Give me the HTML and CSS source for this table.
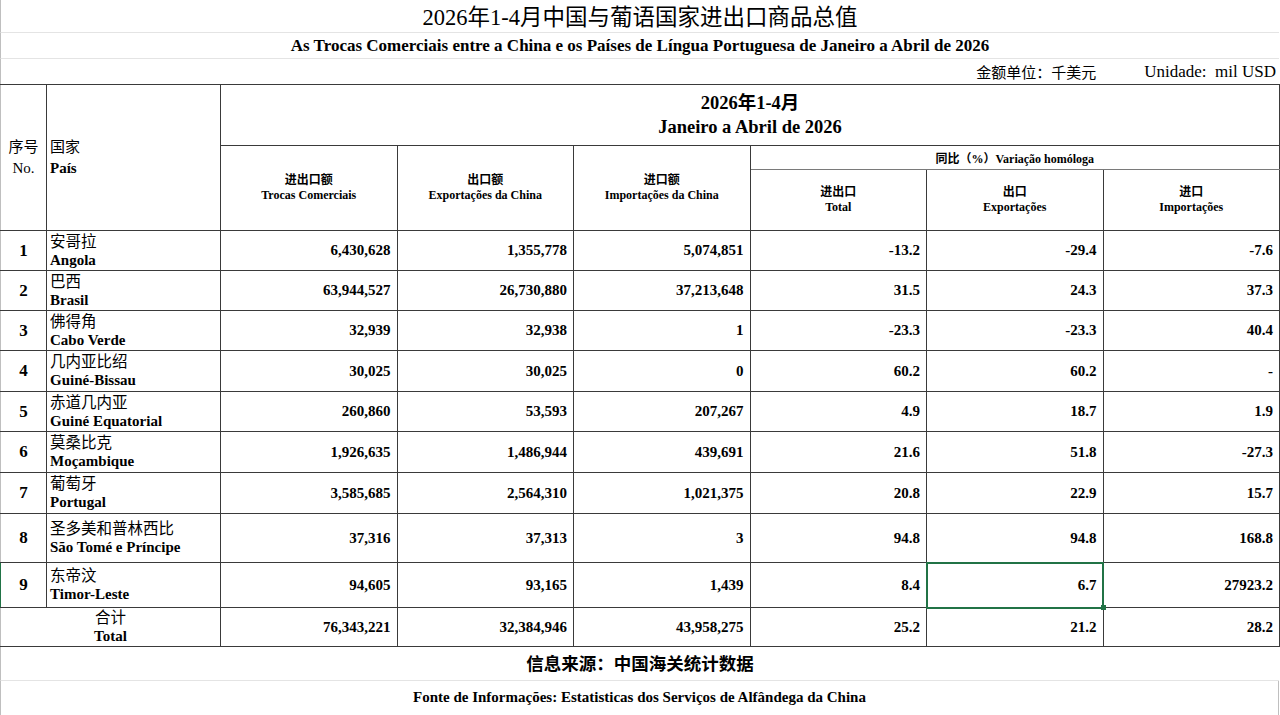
FILE: index.html
```html
<!DOCTYPE html>
<html lang="zh-CN">
<head>
<meta charset="utf-8">
<title>2026年1-4月中国与葡语国家进出口商品总值</title>
<link rel="stylesheet" href="styles.css">
</head>
<body>
<div class="page">
  <div class="band title">2026年1-4月中国与葡语国家进出口商品总值</div>
  <div class="band subtitle">As Trocas Comerciais entre a China e os Países de Língua Portuguesa de Janeiro a Abril de 2026</div>
  <div class="band unit"><span class="unit-cn">金额单位：千美元</span><span class="unit-pt">Unidade:&nbsp; mil USD</span></div>
  <table class="grid">
    <colgroup>
      <col class="c-no"><col class="c-country"><col class="c-val"><col class="c-val"><col class="c-val"><col class="c-val"><col class="c-val"><col class="c-val">
    </colgroup>
    <tbody>
      <tr class="h1">
        <td rowspan="3" class="first hno"><div>序号</div><div>No.</div></td>
        <td rowspan="3" class="hcountry"><div>国家</div><div class="b">País</div></td>
        <td colspan="6" class="hperiod"><div>2026年1-4月</div><div>Janeiro a Abril de 2026</div></td>
      </tr>
      <tr class="h2">
        <td rowspan="2" class="hsub"><div>进出口额</div><div>Trocas Comerciais</div></td>
        <td rowspan="2" class="hsub"><div>出口额</div><div>Exportações da China</div></td>
        <td rowspan="2" class="hsub"><div>进口额</div><div>Importações da China</div></td>
        <td colspan="3" class="hvar">同比（%）Variação homóloga</td>
      </tr>
      <tr class="h3">
        <td class="hsub"><div>进出口</div><div>Total</div></td>
        <td class="hsub"><div>出口</div><div>Exportações</div></td>
        <td class="hsub"><div>进口</div><div>Importações</div></td>
      </tr>
      <tr class="r40">
        <td class="first no">1</td>
        <td class="country"><div class="cn">安哥拉</div><div class="pt">Angola</div></td>
        <td class="num">6,430,628</td><td class="num">1,355,778</td><td class="num">5,074,851</td>
        <td class="num">-13.2</td><td class="num">-29.4</td><td class="num">-7.6</td>
      </tr>
      <tr class="r40">
        <td class="first no">2</td>
        <td class="country"><div class="cn">巴西</div><div class="pt">Brasil</div></td>
        <td class="num">63,944,527</td><td class="num">26,730,880</td><td class="num">37,213,648</td>
        <td class="num">31.5</td><td class="num">24.3</td><td class="num">37.3</td>
      </tr>
      <tr class="r40">
        <td class="first no">3</td>
        <td class="country"><div class="cn">佛得角</div><div class="pt">Cabo Verde</div></td>
        <td class="num">32,939</td><td class="num">32,938</td><td class="num">1</td>
        <td class="num">-23.3</td><td class="num">-23.3</td><td class="num">40.4</td>
      </tr>
      <tr class="r41">
        <td class="first no">4</td>
        <td class="country"><div class="cn">几内亚比绍</div><div class="pt">Guiné-Bissau</div></td>
        <td class="num">30,025</td><td class="num">30,025</td><td class="num">0</td>
        <td class="num">60.2</td><td class="num">60.2</td><td class="num">-</td>
      </tr>
      <tr class="r40">
        <td class="first no">5</td>
        <td class="country"><div class="cn">赤道几内亚</div><div class="pt">Guiné Equatorial</div></td>
        <td class="num">260,860</td><td class="num">53,593</td><td class="num">207,267</td>
        <td class="num">4.9</td><td class="num">18.7</td><td class="num">1.9</td>
      </tr>
      <tr class="r41">
        <td class="first no">6</td>
        <td class="country"><div class="cn">莫桑比克</div><div class="pt">Moçambique</div></td>
        <td class="num">1,926,635</td><td class="num">1,486,944</td><td class="num">439,691</td>
        <td class="num">21.6</td><td class="num">51.8</td><td class="num">-27.3</td>
      </tr>
      <tr class="r41">
        <td class="first no">7</td>
        <td class="country"><div class="cn">葡萄牙</div><div class="pt">Portugal</div></td>
        <td class="num">3,585,685</td><td class="num">2,564,310</td><td class="num">1,021,375</td>
        <td class="num">20.8</td><td class="num">22.9</td><td class="num">15.7</td>
      </tr>
      <tr class="r49">
        <td class="first no">8</td>
        <td class="country"><div class="cn">圣多美和普林西比</div><div class="pt">São Tomé e Príncipe</div></td>
        <td class="num">37,316</td><td class="num">37,313</td><td class="num">3</td>
        <td class="num">94.8</td><td class="num">94.8</td><td class="num">168.8</td>
      </tr>
      <tr class="r45">
        <td class="first no active-row">9</td>
        <td class="country"><div class="cn">东帝汶</div><div class="pt">Timor-Leste</div></td>
        <td class="num">94,605</td><td class="num">93,165</td><td class="num">1,439</td>
        <td class="num">8.4</td><td class="num selected">6.7</td><td class="num">27923.2</td>
      </tr>
      <tr class="r38">
        <td colspan="2" class="first total"><div class="cn">合计</div><div class="pt">Total</div></td>
        <td class="num">76,343,221</td><td class="num">32,384,946</td><td class="num">43,958,275</td>
        <td class="num">25.2</td><td class="num">21.2</td><td class="num">28.2</td>
      </tr>
    </tbody>
  </table>
  <div class="band source-cn">信息来源：中国海关统计数据</div>
  <div class="band source-pt">Fonte de Informações: Estatisticas dos Serviços de Alfândega da China</div>
</div>
</body>
</html>
```
FILE: styles.css
```css
html, body {
  margin: 0;
  padding: 0;
  background: #ffffff;
}

body {
  font-family: "Liberation Serif", "Noto Sans CJK SC", serif;
  color: #000000;
}

.page {
  width: 1280px;
  height: 715px;
  overflow: hidden;
}

.band {
  box-sizing: border-box;
  width: 1279px;
  border-left: 1px solid #bfbfbf;
  display: flex;
  align-items: center;
  justify-content: center;
  white-space: nowrap;
}

.title {
  height: 33px;
  border-bottom: 1px solid #e4e4e4;
  font-size: 22.5px;
  padding-bottom: 2px;
}

.subtitle {
  height: 26px;
  border-bottom: 1px solid #e4e4e4;
  font-size: 17px;
  font-weight: bold;
}

.unit {
  height: 25px;
  justify-content: flex-end;
  font-size: 17px;
  padding-right: 3px;
  gap: 48px;
}

.unit-cn {
  font-size: 15px;
}

.grid {
  border-collapse: collapse;
  table-layout: fixed;
  width: 1279px;
}

.c-no { width: 46px; }
.c-country { width: 174px; }
.c-val { width: 176.5px; }

.grid td {
  border: 1px solid #3a3a3a;
  padding: 0;
  vertical-align: middle;
  white-space: nowrap;
  overflow: visible;
}

.grid td.first {
  border-left-color: #bfbfbf;
}

.grid td.active-row {
  border-left-color: #217346;
}

.h1 td { height: 60px; }
.h2 td { height: 23px; }
.h3 td { height: 60px; }
.r40 td { height: 39px; }
.r41 td { height: 40px; }
.r49 td { height: 48px; }
.r45 td { height: 44px; }
.r38 td { height: 36px; }

.hno {
  text-align: center;
  font-size: 15px;
  line-height: 21px;
}

.hcountry {
  text-align: left;
  padding-left: 3px !important;
  font-size: 15px;
  line-height: 21px;
}

.b {
  font-weight: bold;
}

.hperiod {
  text-align: center;
  font-weight: bold;
  font-size: 18.5px;
  line-height: 24px;
}

.hsub {
  text-align: center;
  font-weight: bold;
  font-size: 12px;
  line-height: 15px;
}

.hvar {
  text-align: center;
  font-weight: bold;
  font-size: 12px;
  border-bottom-color: #7a7a7a !important;
}

.no {
  text-align: center;
  font-weight: bold;
  font-size: 17px;
}

.country {
  text-align: left;
  padding-left: 3px !important;
  line-height: 19px;
}

.country .cn,
.total .cn {
  font-size: 15.5px;
  font-weight: normal;
}

.country .pt,
.total .pt {
  font-size: 15px;
  font-weight: bold;
}

.total {
  text-align: center;
  line-height: 19px;
}

.num {
  text-align: right;
  font-weight: bold;
  font-size: 15px;
  padding-right: 6px !important;
}

.selected {
  position: relative;
  outline: 2px solid #217346;
  outline-offset: -1px;
}

.selected::after {
  content: "";
  position: absolute;
  right: -3px;
  bottom: -3px;
  width: 5px;
  height: 5px;
  background: #217346;
}

.source-cn {
  height: 34px;
  border-bottom: 1px solid #e4e4e4;
  font-size: 17.5px;
  font-weight: bold;
  padding-bottom: 2px;
}

.source-pt {
  height: 35px;
  font-size: 15px;
  font-weight: bold;
  border-right: 1px solid #bfbfbf;
  padding-bottom: 2px;
}
```
